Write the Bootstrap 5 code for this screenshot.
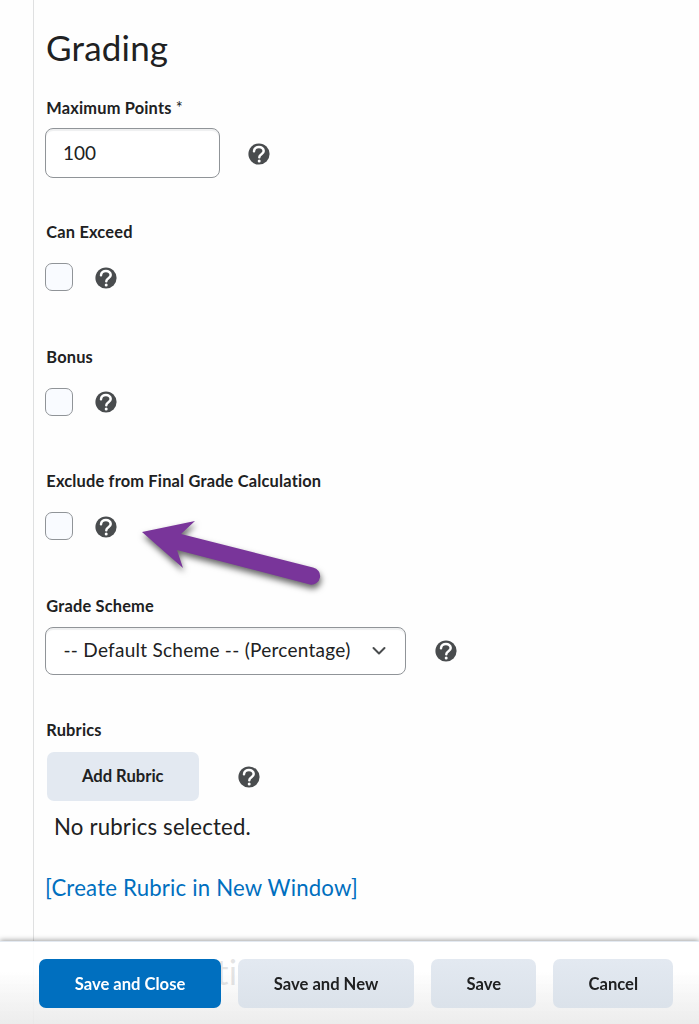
<!DOCTYPE html>
<html lang="en">
<head>
<meta charset="utf-8">
<meta name="viewport" content="width=device-width, initial-scale=1">
<title>Grading</title>
<link href="https://cdn.jsdelivr.net/npm/bootstrap@5.3.0/dist/css/bootstrap.min.css" rel="stylesheet">
<style>
html, body { height: 100%; overflow: hidden; }
body { font-family: Lato, "Liberation Sans", sans-serif; font-variant-ligatures: none; color: #202122; background: #fefefe; }
.page { height: 1024px; padding-left: 33px; }
.panel { height: 1024px; border-left: 1px solid #dfe0e1; padding: 22px 0 0 11px; overflow: hidden; }
.title { font-size: 35px; line-height: 50px; height: 74px; margin: 0 0 0 1px; font-weight: 400; letter-spacing: .2px; white-space: nowrap; }
.field { height: 124.4px; }
.field-label { display: block; font-size: 16.4px; line-height: 24px; padding-bottom: 1px; font-weight: 700; margin-left: 1.3px; letter-spacing: .18px; white-space: nowrap; }
.req { font-weight: 400; }
.points { width: 175px; height: 50px; margin-top: 7px; padding: 0 17px 1px; font-size: 19px; }
.points, .scheme { border: 1px solid #909498; border-radius: 8px; color: #202122; background: #fff; box-shadow: inset 0 2px 1px #eeeff0; }
.scheme { width: 361px; height: 48px; padding: 0 19px 0 17.5px; margin-top: 8px; font-size: 19px; letter-spacing: .27px; white-space: nowrap; }
.check { appearance: none; width: 28px; height: 28px; margin: 0; border: 1px solid #909498; border-radius: 7px; background: #f9fbff; }
.check-row { padding-top: 17.9px; }
.check-row .help { margin: 1px 0 0 22px; }
.help { width: 22px; height: 22px; flex: none; }
.soft, .main-btn { border: 0; border-radius: 7px; font-size: 16.6px; font-weight: 700; height: 49px; padding: 0; white-space: nowrap; }
.soft, .soft:hover { background: #e3e9f1; color: #202122; }
.main-btn, .main-btn:hover { background: #006fbf; color: #fff; }
.big { font-size: 22.2px; line-height: 30px; letter-spacing: .19px; white-space: nowrap; }
.rubric-link { color: #006fbf; }
.actions { height: 83px; padding: 17px 0 0 39px; border-top: 1px solid #e3e9f1; background: linear-gradient(rgba(255,255,255,.88) 0, rgba(255,255,255,.88) 35%, rgba(234,234,234,.9) 100%); box-shadow: 0 -1px 5px rgba(0,0,0,.36); }
.actions .btn { padding-top: 1px; }
.actions .soft { background: linear-gradient(#e3e9f1, #dbe2ea); }
.arrow { left: 130px; top: 510px; }
</style>
</head>
<body>
<svg class="d-none">
  <symbol id="help" viewBox="0 0 22 22">
    <circle cx="11" cy="11" r="10.6" fill="#494c4e"/>
    <path d="M6 8.2C6.200 2.700 15.700 2.700 15.700 8.100c0 3.400-4.400 3-4.400 6.200" fill="none" stroke="#fff" stroke-width="2.5" stroke-linecap="round"/>
    <circle cx="11.200" cy="18" r="1.5" fill="#fff"/>
  </symbol>
</svg>
<main class="page">
  <div class="panel">
    <h1 class="title">Grading</h1>
    <div class="field">
      <label class="field-label" for="points">Maximum Points <span class="req">*</span></label>
      <div class="d-flex align-items-center">
        <input id="points" class="points" value="100">
        <svg class="help" style="margin:8px 0 0 28px"><use href="#help"/></svg>
      </div>
    </div>
    <div class="field">
      <label class="field-label" for="exceed">Can Exceed</label>
      <div class="check-row d-flex align-items-center">
        <input id="exceed" class="check" type="checkbox">
        <svg class="help"><use href="#help"/></svg>
      </div>
    </div>
    <div class="field">
      <label class="field-label" for="bonus">Bonus</label>
      <div class="check-row d-flex align-items-center">
        <input id="bonus" class="check" type="checkbox">
        <svg class="help"><use href="#help"/></svg>
      </div>
    </div>
    <div class="field">
      <label class="field-label" for="exclude">Exclude from Final Grade Calculation</label>
      <div class="check-row d-flex align-items-center">
        <input id="exclude" class="check" type="checkbox">
        <svg class="help"><use href="#help"/></svg>
      </div>
    </div>
    <div class="field">
      <span class="field-label">Grade Scheme</span>
      <div class="d-flex align-items-center">
        <button class="scheme d-flex align-items-center justify-content-between" type="button">
          <span>-- Default Scheme -- (Percentage)</span>
          <svg width="14" height="10" viewBox="0 0 14 10"><path d="M1.5 2l5.5 5.5L12.5 2" fill="none" stroke="#494c4e" stroke-width="2" stroke-linecap="round" stroke-linejoin="round"/></svg>
        </button>
        <svg class="help" style="margin:8px 0 0 29px"><use href="#help"/></svg>
      </div>
    </div>
    <div style="height:240px">
      <span class="field-label">Rubrics</span>
      <div class="d-flex align-items-center" style="padding:9px 0 0 1.500px">
        <button class="btn soft" style="width:152.500px" type="button">Add Rubric</button>
        <svg class="help" style="margin:1px 0 0 39px"><use href="#help"/></svg>
      </div>
      <div class="big" style="margin:11px 0 0 9px">No rubrics selected.</div>
      <a class="big rubric-link d-block text-decoration-none" href="#" style="margin-top:31px">[Create Rubric in New Window]</a>
    </div>
    <h2 class="title" style="margin:-12px 0 0 171px">ti</h2>
  </div>
</main>
<svg class="arrow position-absolute" width="210" height="90" viewBox="130 510 210 90">
  <path d="M142 532L195 521L181 534L313 567.500A8.5 8.5 0 0 1 310 584.500L177 550L183 568Z" fill="#79359a" style="filter:drop-shadow(1px 4px 3px rgba(0,0,0,.6))"/>
</svg>
<footer class="actions fixed-bottom d-flex align-items-start">
  <button class="btn main-btn" style="width:182px" type="button">Save and Close</button>
  <button class="btn soft" style="width:176px;margin-left:17px" type="button">Save and New</button>
  <button class="btn soft" style="width:105px;margin-left:17.300px" type="button">Save</button>
  <button class="btn soft" style="width:120px;margin-left:17px" type="button">Cancel</button>
</footer>
<script src="https://cdn.jsdelivr.net/npm/bootstrap@5.3.0/dist/js/bootstrap.bundle.min.js"></script>
</body>
</html>
